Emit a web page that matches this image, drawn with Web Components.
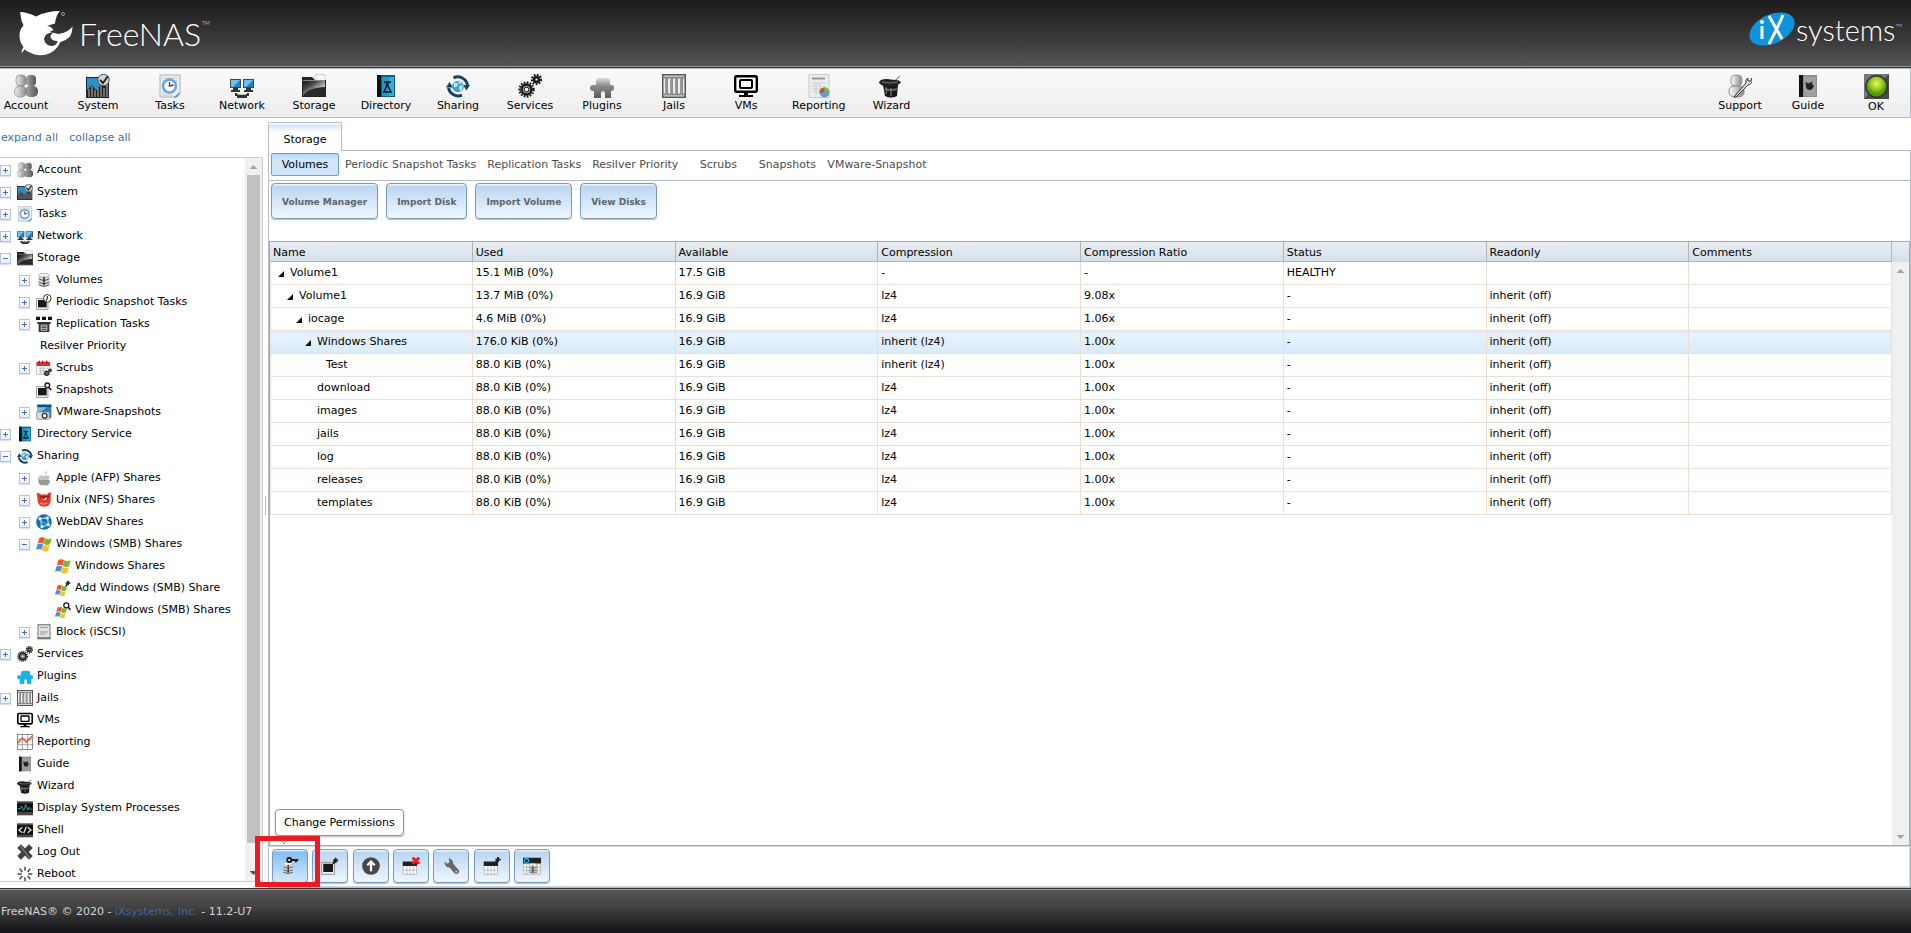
<!DOCTYPE html>
<html lang="en">
<head>
<meta charset="utf-8">
<title>FreeNAS - Storage</title>
<style>
  html, body { height: 100%; margin: 0; }
  body { font: 11px/22px Verdana, "DejaVu Sans", sans-serif; color: #000; background: #fff; overflow: hidden; }
</style>
</head>
<body>
<fn-app></fn-app>
<script>
/* ---------- icon artwork, all on a 24 x 24 grid ---------- */
const win = `<path d="M5 3q4-2.500 8.500 0l-2.500 8.500q-4-2.500-8.500 0z" fill="#e8562a"/><path d="M14 3.500q4.500 2.500 9.500 0l-2.500 9q-4.500 2-9.500-.5z" fill="#7db72f"/><path d="M2.200 12.500q4-2 8.500 0l-2.200 8q-4-2-8.500 0z" fill="#4a8fd8"/><path d="M11.300 13.300q4.400 2.500 9.400 .5l-2.500 8.700q-4.500 2-9.500-1z" fill="#f6c12c"/>`;
const gear = (x, y, r) => `<circle cx="${x}" cy="${y}" r="${r}" fill="none" stroke="#1c1c1c" stroke-width="2.400" stroke-dasharray="1.700 1.300"/><circle cx="${x}" cy="${y}" r="${r - 2}" fill="#999" stroke="#1c1c1c" stroke-width="2.400"/><circle cx="${x}" cy="${y}" r="${r / 3}" fill="#eee" stroke="#222" stroke-width="1"/>`;
const plug = c => `<path d="M4 20.500V24h7v-4.500q0-2.500 2-2.500t2 2.500V24h6v-7h1q2 0 2-3t-2-3h-2V8q0-4-3-4H9Q6 4 6 8v3H3q-3 0-3 3t3 3h1z" fill="${c}"/>`;
const pc = (x) => `<rect x="${x}" y="5" width="11" height="9" fill="#444"/><rect x="${x + 1}" y="6" width="9" height="7" fill="#1d86c8"/><path d="M${x + 1} 6h9L${x + 3} 13h-2z" fill="#6cc3f0"/><path d="M${x + 3} 14h5v2h2v2h-9v-2h2z" fill="#333"/>`;
const disks = (s = '#555') => `<path d="M4 5v14q8 5 16 0V5z" fill="#d4d4d4"/><path d="M4 10q8 5 16 0M4 15q8 5 16 0M4 19q8 5 16 0" stroke="${s}" fill="none" stroke-width="1.500"/><ellipse cx="12" cy="5" rx="8" ry="3" fill="#f4f4f4" stroke="#999"/><path d="M12 7v13" stroke="#222" stroke-width="2"/>`;
const table = `<path d="M1 12h19v11H1z" fill="#fff"/><path d="M1 6h19v6H1z" fill="#231f20"/><path d="M1.500 12v11h18V12M1 17.500h19M6.500 12v11M10.500 12v11M15 12v11" fill="none" stroke="#aaa"/>`;
const photo = `<rect x="1" y="7" width="17" height="16" fill="#eee" stroke="#777"/><rect x="3" y="9" width="13" height="11" fill="#1b1819"/>`;
const plus = `<path d="M16 9l3-3M19.500 1v7M16 4.500h7" stroke="#222" stroke-width="2.600"/>`;
const book = (c1, c2, body) => `<rect x="3" y="1" width="18" height="22" fill="${c1}"/><path d="M3 1h4v22H3z" fill="#111"/><path d="M8 3h12v19H8z" fill="${c2}"/>${body}`;
const ICONS = {
  account: `<defs><linearGradient id="g"><stop stop-color="#eee"/><stop offset="1" stop-color="#8b8b8b"/></linearGradient><linearGradient id="h"><stop stop-color="#aaa"/><stop offset="1" stop-color="#555"/></linearGradient></defs><rect x="12" y="1" width="10" height="11" rx="4" fill="url(#h)"/><rect x="11" y="12" width="13" height="11" rx="5" fill="url(#h)"/><rect x="2" y="1" width="10" height="11" rx="4" fill="url(#g)" stroke="#777" stroke-width=".6"/><rect x="0.500" y="12" width="12" height="11" rx="5" fill="url(#g)" stroke="#777" stroke-width=".6"/>`,
  system: `<rect y="3" width="23" height="21" fill="#222"/><path d="M1 4h21v9L16 10l-6 6-4-5-5 5z" fill="#2f8fc7"/><path d="M3 15v8M6 12v11M9 16v7M12 14v9M15 12v11M18 14v9M21 12v11" stroke="#e5e5e5" stroke-width=".8"/><circle cx="17.500" cy="6" r="5.700" fill="#d2d2d2" stroke="#555"/><path d="M14 6l3 3 5-7" fill="none" stroke="#222" stroke-width="1.800"/>`,
  tasks: `<path d="M2 1h20v18l-4 4H2z" fill="#eef1f3" stroke="#a8b0b6"/><path d="M4 4h16M4 7h16M4 18h12M4 21h11" stroke="#c5cacd"/><path d="M16 23l6-5v2q-2 3-5 4z" fill="#4c99d8"/><circle cx="11.500" cy="12" r="6.500" fill="#f8fbff" stroke="#6da2d8" stroke-width="2.500"/><path d="M11.500 8v4l4-1" fill="none" stroke="#246" stroke-width="1.300"/><circle cx="11.500" cy="12" r="1" fill="#d50"/>`,
  network: pc(0) + pc(13) + `<path d="M7 20h10v-1h2v3h-2v2H7v-2H5v-3h2z" fill="#333"/><path d="M8 20.500h8" stroke="#bbb"/>`,
  storage: `<defs><linearGradient id="g" x2="1" y2="1"><stop stop-color="#111"/><stop offset=".3" stop-color="#444"/><stop offset=".7" stop-color="#d5d5d5"/><stop offset="1" stop-color="#777"/></linearGradient></defs><path d="M13 1l4-1 7 1.500v6H13z" fill="#f4f4f4" stroke="#bbb" stroke-width=".8"/><path d="M0 3h10l3 3h11v17H0z" fill="#222"/><path d="M1 7h22v15H1z" fill="url(#g)"/><path d="M1 22q4-8 22-9v9z" fill="#292929"/><path d="M1 6.500h22" stroke="#888"/>`,
  directory: book('#0a5d87', '#1b9ad0', `<path d="M15 3h5v19h-5z" fill="#57c3ee" opacity=".45"/><path d="M10 8h7M12.500 8v4L10 18h7l-3-6V8M9 18h9" fill="none" stroke="#111" stroke-width="1.300"/>`),
  sharing: `<path d="M7.500 3.800A10 10 0 0 1 21.500 11" fill="none" stroke="#16425f" stroke-width="3"/><path d="M17 11h7l-3.500 5.500z" fill="#16425f"/><path d="M16 21.200A10 10 0 0 1 2.500 14" fill="none" stroke="#16425f" stroke-width="3"/><path d="M0 13.500h7L3.500 8z" fill="#16425f"/><circle cx="12" cy="12.500" r="5.800" fill="#3e9fd3"/><path d="M8 8.500l4 1-1 3-3 1zM13 12.500l4-2-1 5-2 2zM12 7.500h3l1 2h-3z" fill="#c6e8f7"/>`,
  services: gear(8.500, 15.500, 7) + gear(18.500, 5.500, 4.500),
  plugins: `<defs><linearGradient id="g" x2="0" y2="1"><stop stop-color="#ddd"/><stop offset=".4" stop-color="#8a8a8a"/><stop offset="1" stop-color="#5c5c5c"/></linearGradient></defs>` + plug('url(#g)'),
  pluginsblue: plug('#17b4ea'),
  jails: `<rect x=".75" y=".75" width="22.500" height="22.500" fill="#eee" stroke="#555" stroke-width="1.500"/><path d="M1 3.500h22M1 20.500h22" stroke="#888" stroke-width="2"/><path d="M4.500 3v18M9.500 3v18M14.500 3v18M19.500 3v18" stroke="#777" stroke-width="2.600"/><path d="M4 3v18M9 3v18M14 3v18M19 3v18" stroke="#bbb" stroke-width=".8"/>`,
  vms: `<rect x="1.200" y="2.200" width="21.600" height="15.600" rx="1.500" fill="#fff" stroke="#000" stroke-width="2.400"/><rect x="6" y="6" width="12" height="8" rx="1" fill="none" stroke="#000" stroke-width="2"/><path d="M10 18h4v3h5v2H5v-2h5z" fill="#000"/>`,
  reporting: `<rect x="2" y=".5" width="20" height="23" fill="#eceeee" stroke="#ccc"/><path d="M5 4.500h13" stroke="#999" stroke-width="2"/><path d="M5 9h13M5 12h13M5 15h13M5 18h8M9 9v12M13 9v9" stroke="#ccc"/><circle cx="17.500" cy="18.500" r="5" fill="#5c9ee6"/><path d="M17.500 18.500V13.500A5 5 0 0 0 12.500 18.500z" fill="#d64b26"/><path d="M17.500 18.500h5a5 5 0 0 0-5-5z" fill="#72b73a"/>`,
  wizard: `<path d="M4 11h15l-1 11q-6 3-12 0z" fill="#181818"/><path d="M0 9q5 5 12 3 8 0 10-4-2-2-5-2 4-3 5-5l-6 5-8-1Q0 5 0 9z" fill="#222"/><path d="M3 8q8 2 16 0" stroke="#777" fill="none"/><path d="M6 15q6 2 12 0" stroke="#666" stroke-width="2" fill="none"/><path d="M7 20q1-4 0-7M12 22v-8" stroke="#8a8a8a" fill="none"/>`,
  support: `<defs><linearGradient id="g"><stop stop-color="#fff"/><stop offset="1" stop-color="#888"/></linearGradient></defs><rect x="3" y="1" width="11" height="11" rx="4" fill="url(#g)" stroke="#999"/><rect x="1" y="12" width="15" height="11" rx="5" fill="url(#g)" stroke="#888"/><path d="M6 23L18 9q-1-4 2-5l0 3 3 0 1-3q2 5-4 7L8 23z" fill="#ddd" stroke="#333"/>`,
  guide: book('#8d8d8d', '#9f9f9f', `<path d="M9.500 8l3 1.500 4-2-.5 3 2 1q-1 4-4 4.500-4 0-4-4z" fill="#222"/>`),
  ok: `<defs><radialGradient id="g" cy=".35"><stop stop-color="#e6ef6c"/><stop offset=".5" stop-color="#a5d81e"/><stop offset="1" stop-color="#4f9c0c"/></radialGradient></defs><rect width="24" height="24" fill="#4a4a4a"/><path d="M0 0h24L0 24z" fill="#777"/><circle cx="12" cy="12" r="11" fill="#333"/><circle cx="12" cy="12" r="9.500" fill="url(#g)"/>`,
  volumes: disks(),
  periodic: photo + `<circle cx="17" cy="6.500" r="5.700" fill="#fff" stroke="#333" stroke-width="1.500"/><path d="M17 3v4l-2 3" stroke="#222" stroke-width="1.600" fill="none"/>`,
  replication: `<path d="M0 1h6v5H0zM9 1h6v5H9zM18 1h6v5h-6z" fill="#111"/><path d="M2 9h20v3h-2v12H4V12H2z" fill="#333"/><path d="M7 13h10v9H7z" fill="#ddd"/><path d="M8 15h8M8 17.500h8M8 20h8" stroke="#222" stroke-width="1.300"/>`,
  scrubs: `<rect x="1" y="3" width="20" height="19" fill="#fff" stroke="#aaa"/><path d="M1 3h20v6H1z" fill="#dc2f25"/><path d="M5 1v4M10 1v4M16 1v4" stroke="#a11" stroke-width="2"/><path d="M4 12.500h14M4 16h14M4 19.500h8M7 11v9M11 11v9" stroke="#aaa"/><circle cx="16" cy="20" r="3" fill="#777" stroke="#222" stroke-width="2"/><circle cx="21" cy="15.500" r="2" fill="#777" stroke="#222" stroke-width="1.600"/>`,
  snapshots: photo + `<circle cx="17" cy="5" r="3.500" fill="#eee" stroke="#222" stroke-width="2"/><path d="M19 8l4 4" stroke="#222" stroke-width="2.600"/>`,
  vmware: `<rect x="2" y="1" width="21" height="20" fill="#2c80b8"/><path d="M2 1h21v4H2z" fill="#164e78"/><path d="M2 5h15L5 13H2z" fill="#79bfe8"/><rect x="1" y="12" width="19" height="11" rx="1" fill="#ddd" stroke="#777"/><circle cx="13" cy="17.500" r="3.500" fill="#fff" stroke="#333" stroke-width="2"/>`,
  apple: `<path d="M13 7q-1-3 4-6 0 4-4 6zM12 9q5-3 9 1-4 4 0 8-3 6-6 5-3-1-6 0-4 0-6-6-1-7 4-9 3 0 5 1z" fill="#c2c2c2"/><path d="M4 15h16l1 3q-3 6-6 5-3-1-6 0-4 0-5-5z" fill="#999"/>`,
  nfs: `<path d="M1 1q4 0 7 3 4-1 8 0 3-4 7-3-1 4-1 8 1 9-5 12-5 2-10 0-5-3-5-12Q2 5 1 1z" fill="#e23a26"/><path d="M5 5q8 3 15 0 0 5-5 6-7 1-10-6z" fill="#8e1a12"/><path d="M8 6l3 5 6-4-2 5-4 0z" fill="#f7e2de"/><path d="M6 16q5 4 11 0" stroke="#ff8a70" fill="none" stroke-width="2"/>`,
  webdav: `<circle cx="12" cy="12" r="11.800" fill="#186ea9"/><path d="M6 7l11-1 2 10-10 3z" fill="none" stroke="#8bd2f5" stroke-width="2"/><path d="M6 7l4 5 8 4" stroke="#4fb2e6" stroke-width="2" fill="none"/><circle cx="6" cy="7" r="2.500" fill="#d8f0fb"/><circle cx="17" cy="6" r="2.500" fill="#d8f0fb"/><circle cx="18.500" cy="16" r="2.500" fill="#d8f0fb"/><circle cx="9" cy="19" r="2.500" fill="#d8f0fb"/>`,
  windows: win,
  winadd: `<g transform="translate(0 6) scale(.78)">${win}</g>${plus}`,
  winview: `<g transform="translate(0 6) scale(.78)">${win}</g><circle cx="17" cy="5" r="3.800" fill="#fff" stroke="#222" stroke-width="2"/><path d="M20 8l3 4" stroke="#222" stroke-width="2.600"/>`,
  block: `<rect x="3" y="1" width="18" height="20" fill="#e4e2dd" stroke="#777" stroke-width="1.500"/><path d="M6 5h12M6 12h12M6 15h8" stroke="#999" stroke-width="1.500"/><path d="M2 20h20v3H2z" fill="#777"/>`,
  graph: `<rect x=".75" y=".75" width="22.500" height="22.500" fill="#fff" stroke="#555"/><path d="M1 8h22M1 16h22M8 1v22M16 1v22" stroke="#777"/><path d="M1 14l7-8 6 6 9-9" fill="none" stroke="#e2603c" stroke-width="2.400"/>`,
  processes: `<rect y="2" width="24" height="21" fill="#4e4747"/><rect y="5" width="24" height="13" fill="#111"/><path d="M1 13h4l2-4 3 7 3-9 3 8 2-4 2 3h3" fill="none" stroke="#46a6c6" stroke-width="1.300"/>`,
  shell: `<rect y="2" width="24" height="21" fill="#4e4747"/><rect y="5" width="24" height="14" fill="#111"/><path d="M8 8l-5 4 5 4M16 8l5 4-5 4M14 7l-4 10" fill="none" stroke="#ddd" stroke-width="2"/>`,
  logout: `<path d="M6 1l6 6 6-6 5 5-6 6 6 6-5 5-6-6-6 6-5-5 6-6-6-6z" fill="#3e3e3e" stroke="#222"/><path d="M5 3l14 18" stroke="#777" stroke-width="2"/>`,
  reboot: `<path d="M12 1v6M12 17v6M1 12h6M17 12h6M4 4l4 5M20 4l-4 5M4 20l4-5M20 20l-4-5" stroke="#444" stroke-width="2.200"/>`,
  perms: `<g transform="translate(0 5) scale(.8)">${disks()}</g><circle cx="11" cy="4" r="2.700" fill="#fff" stroke="#111" stroke-width="2.400"/><path d="M13 4h10M20 3v4" stroke="#111" stroke-width="2.600"/>`,
  snapadd: photo + plus,
  promote: `<circle cx="12" cy="12" r="11.800" fill="#474747"/><path d="M12 19V8M7 11l5-5 5 5" fill="none" stroke="#fff" stroke-width="3"/>`,
  tabledel: table + `<path d="M14 1l9 8M23 1l-9 8" stroke="#ee1c25" stroke-width="4"/>`,
  wrench: `<path d="M3 6l4 3 3-2-1-5q6 1 6 7l7 8q2 4-1 5-2 2-5-1l-6-7q-6 0-7-8z" fill="#666"/><circle cx="19" cy="19.500" r="1.300" fill="#ddd"/>`,
  tableadd: table + `<path d="M16 8l3-3M20 0v7M16.500 3.500h7" stroke="#222" stroke-width="2.600"/>`,
  voledit: `<path d="M0 1h24v8H0z" fill="#231f20"/><path d="M0 9h24v14H0z" fill="#f4f4f4"/><path d="M.5 9v14h23V9M0 13.500h24M0 18h24M5 9v14M19 9v14" stroke="#aaa" fill="none"/><circle cx="4.500" cy="5" r="3" fill="none" stroke="#29abe2" stroke-width="1.800"/><g transform="translate(5 7) scale(.68)">${disks()}</g>`
};

const define = (name, html, setup) => {
  const tpl = document.createElement('template');
  tpl.innerHTML = html;
  customElements.define(name, class extends HTMLElement {
    constructor() {
      super();
      this.attachShadow({ mode: 'open' }).append(tpl.content.cloneNode(true));
    }
    connectedCallback() {
      if (setup && !this.ready) { this.ready = true; setup(this, this.shadowRoot); }
    }
  });
};

define('fn-icon', `
<style>
  :host { display: block; flex: none; width: var(--icon-size, 24px); height: var(--icon-size, 24px); }
  svg { display: block; width: 100%; height: 100%; }
</style>
<svg viewBox="0 0 24 24" aria-hidden="true"></svg>`,
(el, root) => { root.querySelector('svg').innerHTML = ICONS[el.getAttribute('name')] || ''; });

define('fn-header', `
<style>
  :host { display: flex; flex: none; box-sizing: border-box; height: 68px; justify-content: space-between; align-items: flex-start;
    background: linear-gradient(#1c1c1c, #3d3b3b 62%, #565656); border-bottom: 1px solid #333; box-shadow: inset 0 -1px #999; }
  svg { display: block; }
  text { fill: #fff; font-family: Lato, sans-serif; font-weight: 300; }
</style>
<svg width="216" height="66" viewBox="0 0 216 66" role="img" aria-label="FreeNAS">
  <path d="M20 12q7 0 16 4.500Q46 11 60 11q-4 4-5 12.500-3 .5-8 2.500 4 0 6.500 4l-4 2q5 1 9 2 6-1 9-3 3-2 5-4.500 0 6-3 10.500-4 4-9 5-5 10-14 12.500-6 1.500-12 0-6-2-10-5l-3 4q0-4 2-6.500-4-5-4-11.500 0-6 4-10-3-6-3-11z" fill="#fff"/>
  <path d="M54 32.500q-9-.5-10 6.500 1 6 7 7 6 0 6.500-5-6 0-7-4 0-3 3.500-4.500z" fill="#3c3b3b"/>
  <circle cx="63" cy="14" r="1.500" fill="none" stroke="#999"/>
  <text x="79" y="46" font-size="32">FreeNAS</text>
  <text x="202" y="25" font-size="5">TM</text>
</svg>
<svg width="166" height="66" viewBox="0 0 166 66" role="img" aria-label="iXsystems">
  <ellipse cx="27" cy="29" rx="24" ry="14.500" transform="rotate(-25 27 29)" fill="#0d95dc"/>
  <path d="M17 26v13" stroke="#fff" stroke-width="3"/><circle cx="17" cy="22" r="2" fill="#fff"/>
  <path d="M24 16l13 23M38 15q-6 14-14 29" stroke="#fff" stroke-width="3" fill="none"/>
  <text x="51" y="41" font-size="29">systems</text>
  <text x="151" y="27" font-size="4">TM</text>
</svg>`);

define('fn-nav', `
<style>
  :host { display: flex; flex: none; box-sizing: border-box; height: 50px; padding-right: 8px; justify-content: space-between;
    border: 1px solid #b5bcc7; border-left: 0; background: linear-gradient(#fafafa, #ededed); }
  nav { display: flex; gap: 20px; }
  nav + nav { gap: 16px; }
</style>
<nav><slot></slot></nav><nav><slot name="end"></slot></nav>`);

define('fn-nav-item', `
<style>
  :host { display: block; min-width: 52px; }
  :host([icon="ok"]) { --icon-size: 25px; }
  a { display: flex; flex-direction: column; align-items: center; padding-top: 5px; gap: 1px; color: #000; text-decoration: none; line-height: 14px; }
</style>
<a href="#"><fn-icon></fn-icon><slot></slot></a>`,
(el, root) => {
  const old = root.querySelector('fn-icon'), icon = document.createElement('fn-icon');
  icon.setAttribute('name', el.getAttribute('icon'));
  old.replaceWith(icon);
});

define('fn-scrollbar', `
<style>
  :host { display: flex; flex: none; flex-direction: column; align-items: center; justify-content: space-between; background: #f0f0f0; }
  :host([thumb]) { justify-content: flex-start; }
  i { flex: none; box-sizing: border-box; width: 8px; height: 4px; margin: 7px 0 6px; background: #a3a3a3; }
  .up { clip-path: polygon(50% 0, 100% 100%, 0 100%); }
  .down { clip-path: polygon(0 0, 100% 0, 50% 100%); background: var(--down, #a3a3a3); }
  .thumb { display: none; width: 13px; background: #c1c1c1; flex: 94 0 0; }
  .rest { display: none; flex: 3 0 0; }
  :host([thumb]) div { display: block; }
</style>
<i class="up"></i><div class="thumb"></div><div class="rest"></div><i class="down"></i>`);

define('fn-tree-node', `
<style>
  :host { display: block; --icon-size: 16px; }
  .row { display: flex; align-items: center; height: 22px; white-space: nowrap; }
  button { box-sizing: border-box; flex: none; width: 11px; height: 11px; margin: 2px 6px 0 0; padding: 0; border: 1px solid #b3c3dd;
    background: linear-gradient(#fff, #e8eef8); display: grid; place-items: center; box-shadow: 0 1px 1px #dde3ee; }
  button svg { display: block; width: 5px; height: 5px; }
  .blank { visibility: hidden; }
  fn-icon { margin: 2px 4px 0 0; }
  a { margin-top: 2px; color: #000; text-decoration: none; }
  a.plain { margin-left: 4px; }
  .kids { margin-left: 19px; }
</style>
<div class="row"><button type="button" aria-label="Toggle"><svg viewBox="0 0 5 5"><path d="M0 2h5v1H0z" fill="#4d6fa8"/><path class="v" d="M2 0h1v5H2z" fill="#4d6fa8"/></svg></button><a href="#"></a></div>
<div class="kids"><slot></slot></div>`,
(el, root) => {
  const state = el.getAttribute('state'), button = root.querySelector('button'), link = root.querySelector('a');
  link.textContent = el.getAttribute('label');
  if (!state) button.className = 'blank';
  if (state === 'open') root.querySelector('.v').remove();
  if (el.hasAttribute('icon')) {
    const icon = document.createElement('fn-icon');
    icon.setAttribute('name', el.getAttribute('icon'));
    link.before(icon);
  } else link.className = 'plain';
});

const TREE = [
  ['Account', 'account', 'closed'], ['System', 'system', 'closed'], ['Tasks', 'tasks', 'closed'], ['Network', 'network', 'closed'],
  ['Storage', 'storage', 'open', [
    ['Volumes', 'volumes', 'closed'], ['Periodic Snapshot Tasks', 'periodic', 'closed'], ['Replication Tasks', 'replication', 'closed'],
    ['Resilver Priority'], ['Scrubs', 'scrubs', 'closed'], ['Snapshots', 'snapshots'], ['VMware-Snapshots', 'vmware', 'closed']]],
  ['Directory Service', 'directory', 'closed'],
  ['Sharing', 'sharing', 'open', [
    ['Apple (AFP) Shares', 'apple', 'closed'], ['Unix (NFS) Shares', 'nfs', 'closed'], ['WebDAV Shares', 'webdav', 'closed'],
    ['Windows (SMB) Shares', 'windows', 'open', [
      ['Windows Shares', 'windows'], ['Add Windows (SMB) Share', 'winadd'], ['View Windows (SMB) Shares', 'winview']]],
    ['Block (iSCSI)', 'block', 'closed']]],
  ['Services', 'services', 'closed'], ['Plugins', 'pluginsblue'], ['Jails', 'jails', 'closed'], ['VMs', 'vms'], ['Reporting', 'graph'],
  ['Guide', 'guide'], ['Wizard', 'wizard'], ['Display System Processes', 'processes'], ['Shell', 'shell'], ['Log Out', 'logout'], ['Reboot', 'reboot']
];
const treeMarkup = nodes => nodes.map(([label, icon, state, kids]) =>
  `<fn-tree-node label="${label}"${icon ? ` icon="${icon}"` : ''}${state ? ` state="${state}"` : ''}>${kids ? treeMarkup(kids) : ''}</fn-tree-node>`).join('');

define('fn-sidebar', `
<style>
  :host { display: flex; flex-direction: column; flex: none; width: 263px; min-height: 0; padding-bottom: 6px; box-sizing: border-box; }
  p { margin: 0; padding: 9px 1px 8px; display: flex; gap: 11px; }
  p a { color: #4371a8; text-decoration: none; }
  .box { display: flex; flex: 1; min-height: 0; border: 1px solid #ccc; border-left: 0; }
  .tree { flex: 1; min-width: 0; overflow: hidden; }
  fn-scrollbar { width: 17px; --down: #505050; }
</style>
<p><a href="#">expand all</a><a href="#">collapse all</a></p>
<div class="box"><div class="tree"></div><fn-scrollbar thumb></fn-scrollbar></div>`,
(el, root) => { root.querySelector('.tree').innerHTML = treeMarkup(TREE); });

define('fn-subtab', `
<style>
  :host { display: block; }
  button { box-sizing: border-box; min-width: 68px; height: 23px; padding: 0 4px; border: 1px solid transparent; border-radius: 2px;
    background: none; color: #4d4d4d; font: inherit; line-height: 19px; white-space: nowrap; display: block; }
  :host([selected]) button { color: #000; border-color: #769dc0; background: linear-gradient(#b5d7f7, #cfe5fa 25%, #cfe5fa); }
</style>
<button type="button" role="tab"><slot></slot></button>`);

define('fn-button', `
<style>
  :host { display: block; }
  button { box-sizing: border-box; display: block; height: 36px; padding: 2px 10px 0; border: 1px solid #759dc0; border-radius: 4px;
    background: linear-gradient(#fff, #bcd8f4 2px, #bcd8f4 10%, #f0f6fd); box-shadow: 0 1px 1px #bbb;
    color: #5f6468; font: bold 9px/20px Verdana, "DejaVu Sans", sans-serif; white-space: nowrap; }
</style>
<button type="button"><slot></slot></button>`);

define('fn-tool', `
<style>
  :host { display: block; --icon-size: 18px; }
  button { box-sizing: border-box; width: 36px; height: 34px; padding: 0; display: grid; place-items: center; border: 1px solid #759dc0;
    border-radius: 4px; background: linear-gradient(#fff, #bcd8f4 2px, #bcd8f4 10%, #f0f6fd); box-shadow: 0 1px 1px #bbb; }
  :host([active]) button { background: linear-gradient(#fff, #86bff5 2px, #86bff5 10%, #d5e8fb); }
</style>
<button type="button"></button>`,
(el, root) => {
  const button = root.querySelector('button'), icon = document.createElement('fn-icon');
  button.setAttribute('aria-label', el.getAttribute('label'));
  icon.setAttribute('name', el.getAttribute('icon'));
  button.append(icon);
});

const COLUMNS = ['Name', 'Used', 'Available', 'Compression', 'Compression Ratio', 'Status', 'Readonly', 'Comments'];
const child = name => [3, name, 0, '88.0 KiB (0%)', '16.9 GiB', 'lz4', '1.00x', '-', 'inherit (off)', ''];
const ROWS = [
  [0, 'Volume1', 1, '15.1 MiB (0%)', '17.5 GiB', '-', '-', 'HEALTHY', '', ''],
  [1, 'Volume1', 1, '13.7 MiB (0%)', '16.9 GiB', 'lz4', '9.08x', '-', 'inherit (off)', ''],
  [2, 'iocage', 1, '4.6 MiB (0%)', '16.9 GiB', 'lz4', '1.06x', '-', 'inherit (off)', ''],
  [3, 'Windows Shares', 1, '176.0 KiB (0%)', '16.9 GiB', 'inherit (lz4)', '1.00x', '-', 'inherit (off)', ''],
  [4, 'Test', 0, '88.0 KiB (0%)', '16.9 GiB', 'inherit (lz4)', '1.00x', '-', 'inherit (off)', ''],
  ...['download', 'images', 'jails', 'log', 'releases', 'templates'].map(child)
];

define('fn-grid', `
<style>
  :host { display: flex; min-height: 0; border: 1px solid #aaa; }
  .body { flex: 1; min-width: 0; overflow: hidden; }
  table { width: 100%; table-layout: fixed; border-collapse: separate; border-spacing: 0; }
  th, td { box-sizing: border-box; padding: 0 3px; text-align: left; font-weight: normal; white-space: nowrap; overflow: hidden; }
  th { height: 20px; padding-top: 2px; line-height: 17px; border-right: 1px solid #b4b4b4; border-bottom: 1px solid #b4b4b4; background: linear-gradient(#eaedf4, #d5e0ea); }
  td { height: 23px; line-height: 22px; border-right: 1px solid #efdfd2; border-bottom: 1px solid #efdfd2; }
  td:first-child { border-left: 1px solid #efdfd2; }
  tr.selected td { background: linear-gradient(#d9ebfb, #e9f3fd 20%, #d9ebfa); }
  .name { display: flex; align-items: center; padding-left: calc(4px + var(--level) * 9px); }
  .name i { width: 6px; height: 6px; margin: 2px 6px 0 0; clip-path: polygon(100% 0, 100% 100%, 0 100%); background: #111; }
  .name i.leaf { visibility: hidden; }
  .side { display: flex; flex-direction: column; width: 17px; }
  .cap { height: 20px; background: linear-gradient(#eaedf4, #d5e0ea); }
  fn-scrollbar { flex: 1; }
</style>
<div class="body"><table><thead><tr></tr></thead><tbody></tbody></table></div>
<div class="side"><div class="cap"></div><fn-scrollbar></fn-scrollbar></div>`,
(el, root) => {
  root.querySelector('thead tr').innerHTML = COLUMNS.map(c => `<th scope="col">${c}</th>`).join('');
  root.querySelector('tbody').innerHTML = ROWS.map(([level, name, parent, ...cells], i) =>
    `<tr${i === 3 ? ' class="selected"' : ''}><td><div class="name" style="--level:${level}"><i${parent ? '' : ' class="leaf"'}></i>${name}</div></td>${cells.map(c => `<td>${c}</td>`).join('')}</tr>`).join('');
});

define('fn-workspace', `
<style>
  :host { display: flex; flex-direction: column; flex: 1; min-width: 0; min-height: 0; padding-top: 4px; }
  .tabs { display: flex; flex: none; height: 29px; box-shadow: inset 0 -1px #b5bcc7; }
  .tabs button { box-sizing: border-box; width: 74px; height: 29px; padding: 5px 0 0; font: inherit; color: #000; border: 1px solid #b5bcc7; border-bottom: 0;
    border-radius: 2px 2px 0 0; background: linear-gradient(#fff 1px, #cfe5fa 2px, #fff 9px); }
  .pane { display: flex; flex-direction: column; flex: 1; min-height: 0; border: 1px solid #b5bcc7; border-top: 0; }
  .subtabs { display: flex; flex: none; gap: 1px; padding: 2px 2px 4px; border-bottom: 1px solid #b5bcc7; }
  .actions { display: flex; flex: none; gap: 8px; padding: 2px 2px 22px; }
  fn-grid { flex: 1; }
  .foot { position: relative; flex: none; height: 41px; box-sizing: border-box; padding: 2px 3px 0; border: 1px solid #d3d6dc; border-left: 0; }
  .tools { display: flex; justify-content: space-between; width: 278px; }
  .tip { position: absolute; left: 6px; top: -38px; padding: 0 8px; height: 25px; line-height: 25px; border: 1px solid #759dc0; border-radius: 4px; background: #fff;
    box-shadow: 0 1px 2px #bbb; white-space: nowrap; }
  .tip svg { position: absolute; left: 4px; top: 30px; width: 8px; height: 6px; }
  .mark { position: absolute; left: -14px; top: -11px; box-sizing: border-box; width: 65px; height: 51px; border: 5px solid #ed1c24; }
</style>
<div class="tabs"><button type="button" role="tab">Storage</button></div>
<div class="pane">
  <div class="subtabs"><slot name="subtab"></slot></div>
  <div class="actions"><slot name="action"></slot></div>
  <fn-grid></fn-grid>
  <div class="foot"><div class="tools"><slot name="tool"></slot></div>
    <div class="tip" role="tooltip">Change Permissions<svg viewBox="0 0 8 6"><path d="M2 1l2 3 2-3" fill="#fff" stroke="#759dc0"/></svg></div>
    <div class="mark"></div>
  </div>
</div>`);

define('fn-footer', `
<style>
  :host { display: block; flex: none; box-sizing: border-box; height: 45px; padding: 12px 1px 0; color: #d3d3d3; border-top: 1px solid #333;
    background: linear-gradient(#565656, #464444 36%, #131317); box-shadow: inset 0 1px #999; }
  a { color: #3a6b9d; text-decoration: none; }
</style>
FreeNAS® © 2020 - <a href="#">iXsystems, Inc.</a> - 11.2-U7`);

const NAV = [['account', 'Account'], ['system', 'System'], ['tasks', 'Tasks'], ['network', 'Network'], ['storage', 'Storage'], ['directory', 'Directory'],
  ['sharing', 'Sharing'], ['services', 'Services'], ['plugins', 'Plugins'], ['jails', 'Jails'], ['vms', 'VMs'], ['reporting', 'Reporting'], ['wizard', 'Wizard']];
const NAV_END = [['support', 'Support'], ['guide', 'Guide'], ['ok', 'OK']];
const SUBTABS = ['Volumes', 'Periodic Snapshot Tasks', 'Replication Tasks', 'Resilver Priority', 'Scrubs', 'Snapshots', 'VMware-Snapshot'];
const ACTIONS = ['Volume Manager', 'Import Disk', 'Import Volume', 'View Disks'];
const TOOLS = [['perms', 'Change Permissions'], ['snapadd', 'Create Snapshot'], ['promote', 'Promote Dataset'], ['tabledel', 'Destroy Dataset'],
  ['wrench', 'Edit Options'], ['tableadd', 'Create Dataset'], ['voledit', 'Create zvol']];

define('fn-app', `
<style>
  :host { display: flex; flex-direction: column; height: 100vh; }
  main { display: flex; flex: 1; min-height: 0; }
  .splitter { display: grid; align-items: center; justify-content: center; width: 5px; }
  .splitter i { width: 1px; height: 19px; margin-top: 4px; background: #b5bcc7; }
</style>
<fn-header></fn-header>
<fn-nav>${NAV.map(([i, t]) => `<fn-nav-item icon="${i}">${t}</fn-nav-item>`).join('')}${NAV_END.map(([i, t]) => `<fn-nav-item slot="end" icon="${i}">${t}</fn-nav-item>`).join('')}</fn-nav>
<main>
  <fn-sidebar></fn-sidebar>
  <div class="splitter"><i></i></div>
  <fn-workspace>
    ${SUBTABS.map((t, i) => `<fn-subtab slot="subtab"${i ? '' : ' selected'}>${t}</fn-subtab>`).join('')}
    ${ACTIONS.map(t => `<fn-button slot="action">${t}</fn-button>`).join('')}
    ${TOOLS.map(([i, t], n) => `<fn-tool slot="tool" icon="${i}" label="${t}"${n ? '' : ' active'}></fn-tool>`).join('')}
  </fn-workspace>
</main>
<fn-footer></fn-footer>`);
</script>
</body>
</html>
